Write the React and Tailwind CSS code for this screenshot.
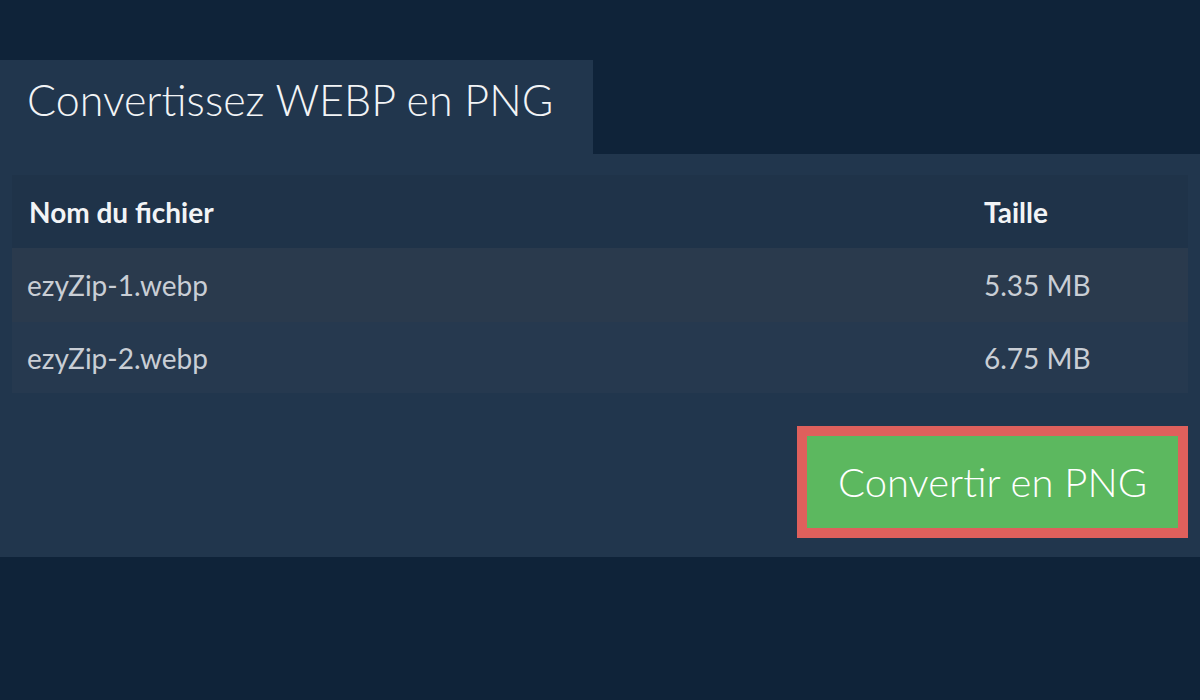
// WEBP -> PNG conversion panel: file list with sizes and the convert action.

import React from 'react';

const files = [
  { name: 'ezyZip-1.webp', size: '5.35 MB' },
  { name: 'ezyZip-2.webp', size: '6.75 MB' },
];

export default function App() {
  return (
    <div className="min-h-[700px] w-[1200px] bg-[#0f2339] pt-[60px] font-['Lato',sans-serif]">
      <div className="w-[593px] h-[94px] bg-[#21364d] pl-[27px] pt-[12px]">
        <h1 className="text-[43px] font-light leading-[56px] text-[#f2f4f6]">
          Convertissez WEBP en PNG
        </h1>
      </div>

      <div className="bg-[#21364d] px-3 pt-[21px] pb-[19px]">
        <table className="w-full border-collapse text-[28px]">
          <thead>
            <tr className="h-[73px] bg-[#1f3349] text-left text-[#f2f4f6]">
              <th className="pl-[17px] font-bold">Nom du fichier</th>
              <th className="w-[204px] font-bold">Taille</th>
            </tr>
          </thead>
          <tbody className="text-[#c9ced5]">
            {files.map((f, i) => (
              <tr
                key={f.name}
                className={i % 2 === 0 ? 'h-[74px] bg-[#2a3a4d]' : 'h-[71px] bg-[#26394f]'}
              >
                <td className="pl-[15px]">{f.name}</td>
                <td>{f.size}</td>
              </tr>
            ))}
          </tbody>
        </table>

        <div className="mt-[33px] flex justify-end">
          <button className="w-[391px] h-[112px] border-[10px] border-[#df605c] bg-[#5cb85f] text-[40px] font-light text-white">
            Convertir en PNG
          </button>
        </div>
      </div>
    </div>
  );
}
